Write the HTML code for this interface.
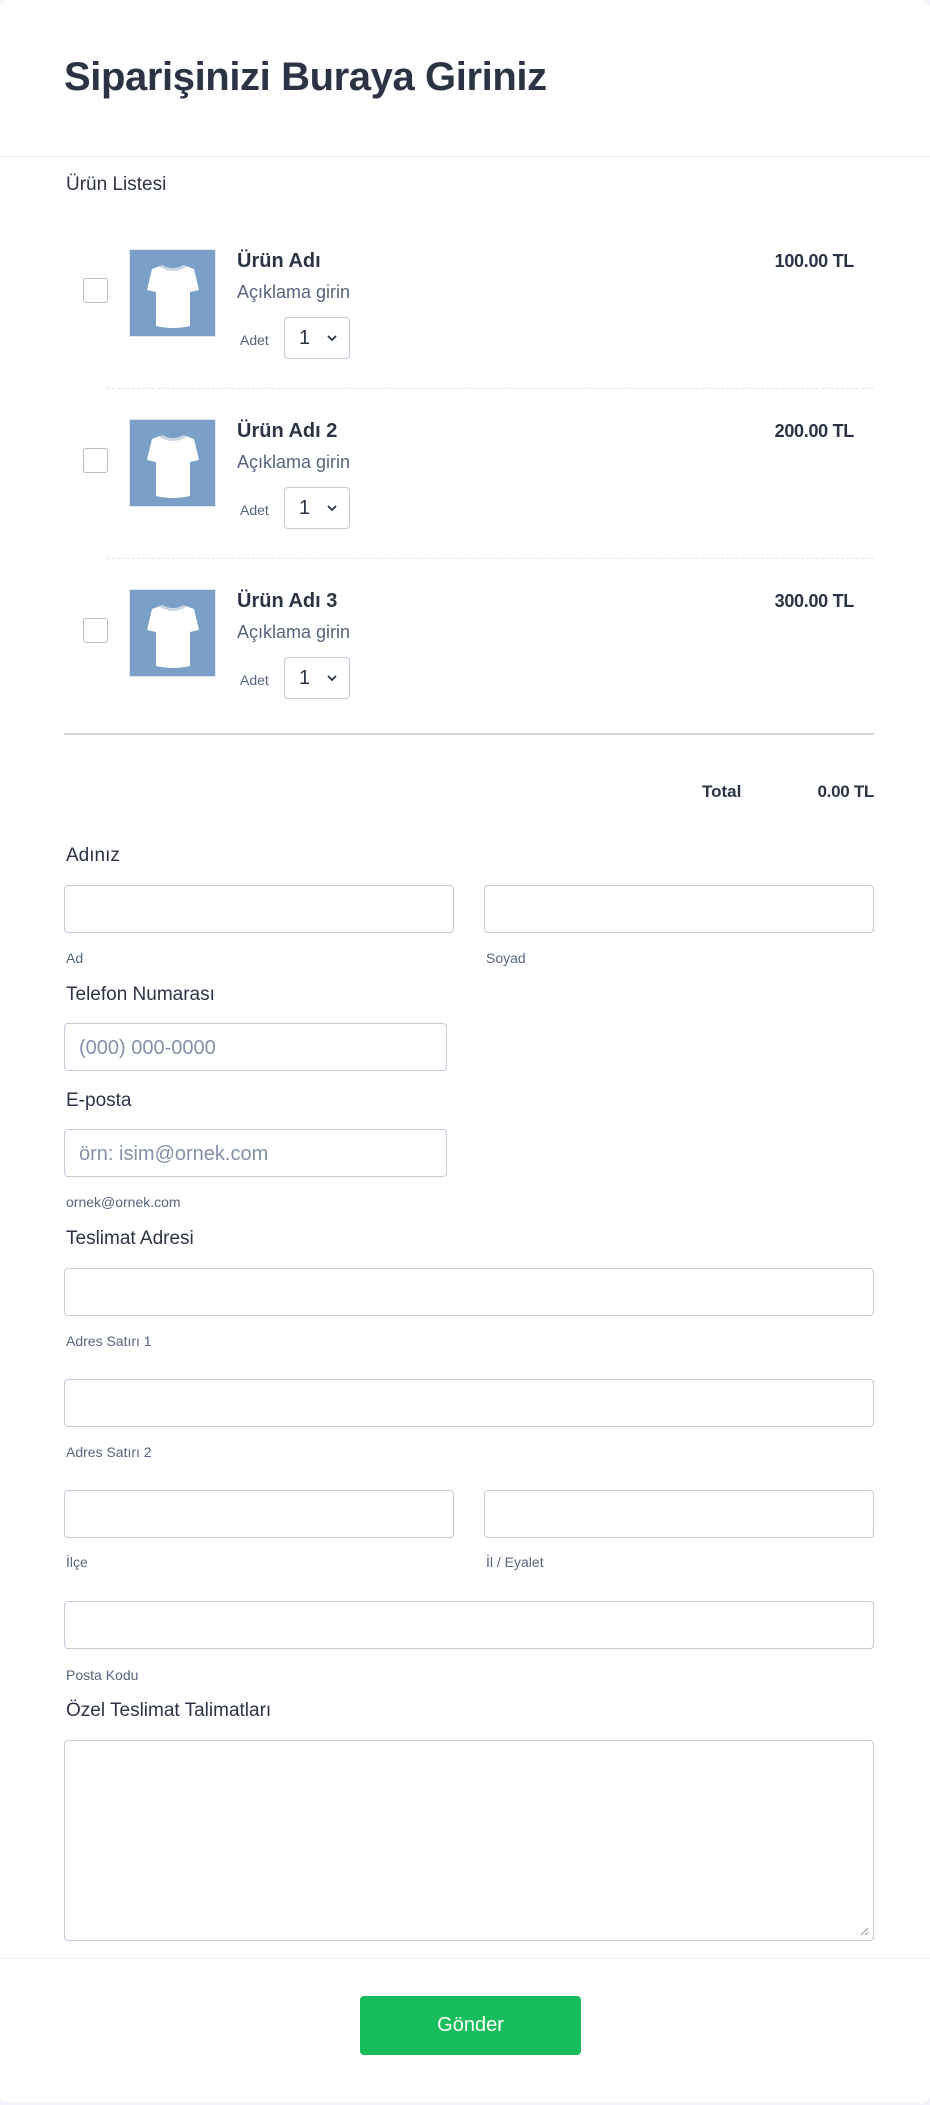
<!DOCTYPE html>
<html><head><meta charset="utf-8"><style>
*{box-sizing:border-box;margin:0;padding:0}
body{width:930px;height:2105px;background:#f3f3fe;font-family:"Liberation Sans",sans-serif;color:#2c3345;position:relative;overflow:hidden}
.card{position:absolute;left:0;top:0;width:930px;height:2103px;background:#fff;border-radius:8px}
.a{position:absolute}
.lbl{font-size:19px;color:#2c3345;left:66px;line-height:22px}
.sub{font-size:14px;color:#57647e;line-height:16px}
.inp{position:absolute;height:48px;border:1px solid #c3cad8;border-radius:4px;background:#fff}
.ph{font-size:20px;color:#8591a8;padding:12px 14px;line-height:24px}
.cb{position:absolute;left:83px;width:25px;height:25px;border:1px solid #b8bdc9;border-radius:3px}
.img{position:absolute;left:129px;width:87px;height:88px;background:#7aa0c7;border:1px solid #e4e8ee}
.nm{position:absolute;left:237px;font-size:20px;font-weight:bold;line-height:24px}
.ds{position:absolute;left:237px;font-size:18px;color:#57647e;line-height:22px}
.ad{position:absolute;left:240px;font-size:14px;color:#57647e}
.sel{position:absolute;left:284px;width:66px;height:42px;border:1px solid #c3cad8;border-radius:4px;font-size:20px;color:#2c3345;padding:9px 0 0 14px}
.sel svg{position:absolute;right:12px;top:17px}
.pr{position:absolute;right:76px;font-size:18px;font-weight:bold;line-height:22px;letter-spacing:-0.3px}
.dash{position:absolute;left:107px;width:767px;border-top:1px dashed #e3e6ec}
</style></head><body>
<div class="card"></div>
<div class="a" style="left:64px;top:53px;font-size:40px;font-weight:bold;color:#2c3345;line-height:48px;letter-spacing:-0.4px">Siparişinizi Buraya Giriniz</div>
<div class="a" style="left:0;top:156px;width:930px;border-top:1px solid #f0f0f7"></div>
<div class="a lbl" style="top:174px">Ürün Listesi</div>

<div class="cb" style="top:278px"></div>
<div class="img" style="top:249px"><svg width="87" height="88" viewBox="0 0 87 88"><path d="M30 16 L22 19 L17 40 L26 42 L26 76 Q43 80 60 76 L60 42 L69 40 L64 19 L56 16 Q43 24 30 16Z" fill="#fff"/><path d="M31 16 Q43 23 55 16" stroke="#c9d6e6" stroke-width="3" fill="none"/></svg></div>
<div class="nm" style="top:249px">Ürün Adı</div>
<div class="ds" style="top:281px">Açıklama girin</div>
<div class="ad" style="top:332px">Adet</div>
<div class="sel" style="top:317px">1<svg width="10" height="7" viewBox="0 0 10 7"><path d="M1 1 L5 5 L9 1" stroke="#2c3345" stroke-width="1.8" fill="none"/></svg></div>
<div class="pr" style="top:250px">100.00 TL</div>
<div class="dash" style="top:388px"></div>

<div class="cb" style="top:448px"></div>
<div class="img" style="top:419px"><svg width="87" height="88" viewBox="0 0 87 88"><path d="M30 16 L22 19 L17 40 L26 42 L26 76 Q43 80 60 76 L60 42 L69 40 L64 19 L56 16 Q43 24 30 16Z" fill="#fff"/><path d="M31 16 Q43 23 55 16" stroke="#c9d6e6" stroke-width="3" fill="none"/></svg></div>
<div class="nm" style="top:419px">Ürün Adı 2</div>
<div class="ds" style="top:451px">Açıklama girin</div>
<div class="ad" style="top:502px">Adet</div>
<div class="sel" style="top:487px">1<svg width="10" height="7" viewBox="0 0 10 7"><path d="M1 1 L5 5 L9 1" stroke="#2c3345" stroke-width="1.8" fill="none"/></svg></div>
<div class="pr" style="top:420px">200.00 TL</div>
<div class="dash" style="top:558px"></div>

<div class="cb" style="top:618px"></div>
<div class="img" style="top:589px"><svg width="87" height="88" viewBox="0 0 87 88"><path d="M30 16 L22 19 L17 40 L26 42 L26 76 Q43 80 60 76 L60 42 L69 40 L64 19 L56 16 Q43 24 30 16Z" fill="#fff"/><path d="M31 16 Q43 23 55 16" stroke="#c9d6e6" stroke-width="3" fill="none"/></svg></div>
<div class="nm" style="top:589px">Ürün Adı 3</div>
<div class="ds" style="top:621px">Açıklama girin</div>
<div class="ad" style="top:672px">Adet</div>
<div class="sel" style="top:657px">1<svg width="10" height="7" viewBox="0 0 10 7"><path d="M1 1 L5 5 L9 1" stroke="#2c3345" stroke-width="1.8" fill="none"/></svg></div>
<div class="pr" style="top:590px">300.00 TL</div>

<div class="a" style="left:64px;top:733px;width:810px;border-top:2px solid #d3d6dd"></div>
<div class="a" style="left:702px;top:782px;font-size:17px;font-weight:bold">Total</div>
<div class="a" style="right:56px;top:782px;font-size:17px;font-weight:bold;letter-spacing:-0.3px">0.00 TL</div>

<div class="a lbl" style="top:845px">Adınız</div>
<div class="inp" style="left:64px;top:885px;width:390px"></div>
<div class="inp" style="left:484px;top:885px;width:390px"></div>
<div class="a sub" style="left:66px;top:950px">Ad</div>
<div class="a sub" style="left:486px;top:950px">Soyad</div>

<div class="a lbl" style="top:984px">Telefon Numarası</div>
<div class="inp ph" style="left:64px;top:1023px;width:383px">(000) 000-0000</div>
<div class="a lbl" style="top:1090px">E-posta</div>
<div class="inp ph" style="left:64px;top:1129px;width:383px">örn: isim@ornek.com</div>
<div class="a sub" style="left:66px;top:1194px">ornek@ornek.com</div>

<div class="a lbl" style="top:1228px">Teslimat Adresi</div>
<div class="inp" style="left:64px;top:1268px;width:810px"></div>
<div class="a sub" style="left:66px;top:1333px">Adres Satırı 1</div>
<div class="inp" style="left:64px;top:1379px;width:810px"></div>
<div class="a sub" style="left:66px;top:1444px">Adres Satırı 2</div>
<div class="inp" style="left:64px;top:1490px;width:390px"></div>
<div class="inp" style="left:484px;top:1490px;width:390px"></div>
<div class="a sub" style="left:66px;top:1554px">İlçe</div>
<div class="a sub" style="left:486px;top:1554px">İl / Eyalet</div>
<div class="inp" style="left:64px;top:1601px;width:810px"></div>
<div class="a sub" style="left:66px;top:1667px">Posta Kodu</div>

<div class="a lbl" style="top:1700px">Özel Teslimat Talimatları</div>
<div class="inp" style="left:64px;top:1740px;width:810px;height:201px"><svg class="a" style="right:4px;bottom:4px" width="9" height="9"><path d="M1 8 L8 1 M5 8 L8 5" stroke="#999" stroke-width="1"/></svg></div>

<div class="a" style="left:0;top:1958px;width:930px;border-top:1px solid #f0f0f7"></div>
<div class="a" style="left:360px;top:1996px;width:221px;height:59px;background:#18bd5b;border-radius:4px;color:#fff;font-size:20px;text-align:center;line-height:59px">Gönder</div>
</body></html>
